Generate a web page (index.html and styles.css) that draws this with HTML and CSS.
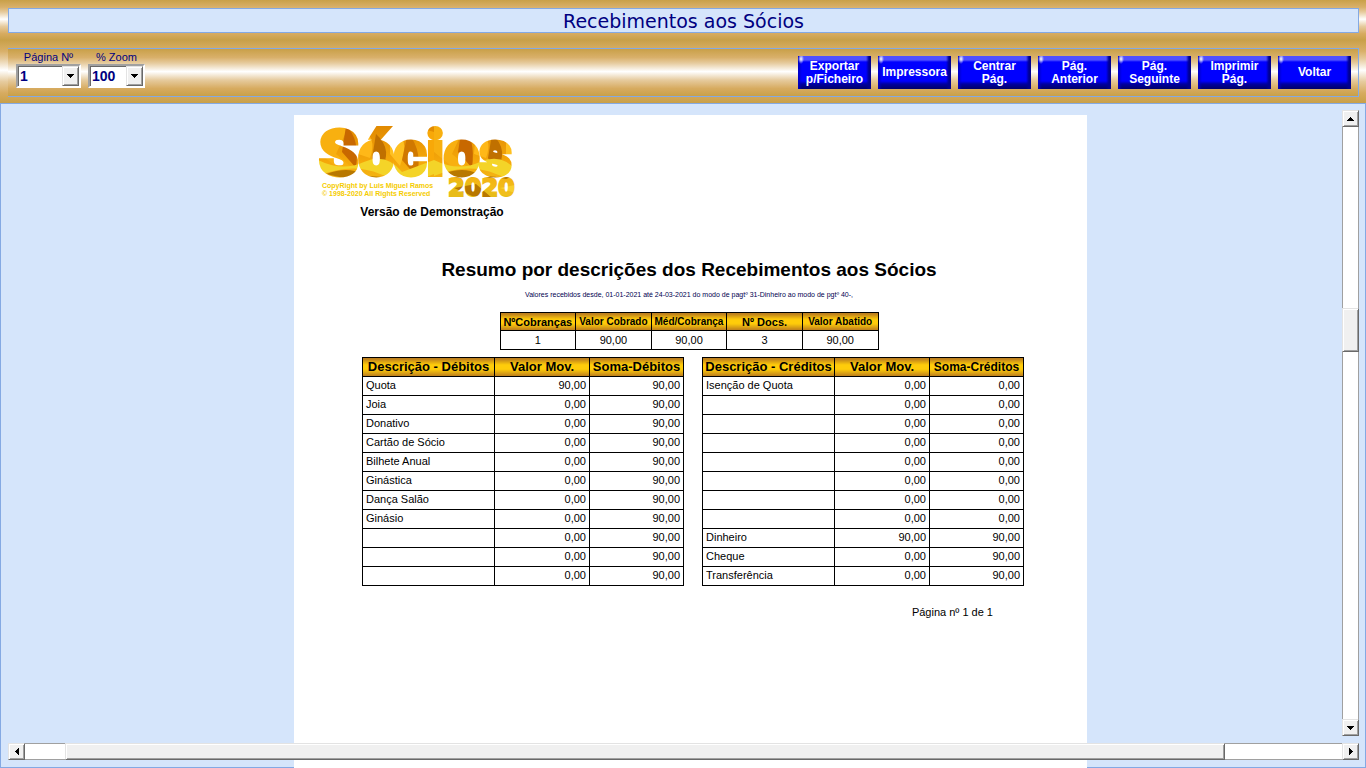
FILE: index.html
```html
<!DOCTYPE html>
<html lang="pt">

<head>
    <meta charset="UTF-8">
    <meta name="viewport" content="width=device-width, initial-scale=1.0">
    <title>Recebimentos aos Sócios</title>
    <link rel="stylesheet" href="styles.css">
</head>

<body>

    <header class="title-band">
        <h1 class="window-title">Recebimentos aos Sócios</h1>
    </header>

    <div class="toolbar-band">
        <div class="toolbar">
            <div class="fields">
                <div class="field">
                    <label for="page">Página Nº</label>
                    <div class="combo combo-page">
                        <select id="page">
                            <option>1</option>
                        </select>
                        <span class="combo-arrow"><svg width="7" height="4" viewBox="0 0 7 4"><path d="M0 0h7v1H0zM1 1h5v1H1zM2 2h3v1H2zM3 3h1v1H3z" /></svg></span>
                    </div>
                </div>
                <div class="field">
                    <label for="zoom">% Zoom</label>
                    <div class="combo combo-zoom">
                        <select id="zoom">
                            <option>100</option>
                        </select>
                        <span class="combo-arrow"><svg width="7" height="4" viewBox="0 0 7 4"><path d="M0 0h7v1H0zM1 1h5v1H1zM2 2h3v1H2zM3 3h1v1H3z" /></svg></span>
                    </div>
                </div>
            </div>
            <div class="actions">
                <button class="action" type="button">Exportar<br>p/Ficheiro</button>
                <button class="action" type="button">Impressora</button>
                <button class="action" type="button">Centrar<br>Pág.</button>
                <button class="action" type="button">Pág.<br>Anterior</button>
                <button class="action" type="button">Pág.<br>Seguinte</button>
                <button class="action" type="button">Imprimir<br>Pág.</button>
                <button class="action" type="button">Voltar</button>
            </div>
        </div>
    </div>

    <main class="viewer">
        <article class="paper">
            <div class="brand">
                <svg class="logo" width="200" height="76" viewBox="0 0 200 76" role="img" aria-label="Sócios 2020">
                    <defs>
                        <linearGradient id="gold" x1="0" y1="0" x2="0" y2="1">
                            <stop offset="0" stop-color="#e08800" />
                            <stop offset="0.5" stop-color="#f5a80a" />
                            <stop offset="1" stop-color="#f0c420" />
                        </linearGradient>
                        <pattern id="petals" width="116" height="76" patternUnits="userSpaceOnUse">
                            <rect width="116" height="76" fill="url(#gold)" />
                            <path d="M0 0L30 4L18 30L44 52L20 44L0 28z" fill="#f8b010" />
                            <path d="M28 2Q42 14 38 44L24 28z" fill="#c86800" />
                            <path d="M42 6Q60 12 52 34L40 30z" fill="#ffb818" />
                            <path d="M58 10Q76 26 62 48L54 34z" fill="#c07000" />
                            <path d="M72 6Q94 10 82 42L72 30z" fill="#ffc020" />
                            <path d="M90 8Q106 30 98 52L84 36z" fill="#d07800" />
                            <path d="M102 4L116 8V42L108 30z" fill="#f8a808" />
                            <path d="M0 36Q24 48 46 38T84 48L116 36V50Q90 62 62 50T0 52z" fill="#f4d428" />
                            <path d="M8 50Q30 42 44 50T84 50L72 55Q50 49 30 55z" fill="#b87800" />
                            <path d="M0 60Q28 52 54 66T116 60V70L80 76H0z" fill="#e8bc18" />
                            <path d="M20 64L42 60L58 74L38 72z" fill="#b87800" />
                            <path d="M66 64L96 58L108 72L84 70z" fill="#f8d030" />
                        </pattern>
                    </defs>
                    <text class="logo-name" x="1" y="51">Sócios</text>
                    <text class="logo-small" x="4" y="64">CopyRight by Luis Miguel Ramos</text>
                    <text class="logo-small" x="4" y="72">© 1998-2020 All Rights Reserved</text>
                    <text class="logo-year" x="130" y="72">2020</text>
                </svg>
                <p class="demo">Versão de Demonstração</p>
            </div>

            <div class="report-head">
                <h2 class="report-title">Resumo por descrições dos Recebimentos aos Sócios</h2>
                <p class="report-range">Valores recebidos desde, 01-01-2021 até 24-03-2021 do modo de pagtº 31-Dinheiro ao modo de pgtº 40-,</p>

                <table class="grid summary">
                    <thead>
                        <tr>
                            <th class="mid">NºCobranças</th>
                            <th>Valor Cobrado</th>
                            <th>Méd/Cobrança</th>
                            <th class="mid">Nº Docs.</th>
                            <th>Valor Abatido</th>
                        </tr>
                    </thead>
                    <tbody>
                        <tr><td>1</td><td>90,00</td><td>90,00</td><td>3</td><td>90,00</td></tr>
                    </tbody>
                </table>
            </div>

            <div class="movements">
                <table class="grid ledger">
                    <colgroup><col class="col-desc"><col class="col-value"><col class="col-sum"></colgroup>
                    <thead>
                        <tr><th>Descrição - Débitos</th><th>Valor Mov.</th><th>Soma-Débitos</th></tr>
                    </thead>
                    <tbody>
                        <tr><td>Quota</td><td>90,00</td><td>90,00</td></tr>
                        <tr><td>Joia</td><td>0,00</td><td>90,00</td></tr>
                        <tr><td>Donativo</td><td>0,00</td><td>90,00</td></tr>
                        <tr><td>Cartão de Sócio</td><td>0,00</td><td>90,00</td></tr>
                        <tr><td>Bilhete Anual</td><td>0,00</td><td>90,00</td></tr>
                        <tr><td>Ginástica</td><td>0,00</td><td>90,00</td></tr>
                        <tr><td>Dança Salão</td><td>0,00</td><td>90,00</td></tr>
                        <tr><td>Ginásio</td><td>0,00</td><td>90,00</td></tr>
                        <tr><td></td><td>0,00</td><td>90,00</td></tr>
                        <tr><td></td><td>0,00</td><td>90,00</td></tr>
                        <tr><td></td><td>0,00</td><td>90,00</td></tr>
                    </tbody>
                </table>

                <table class="grid ledger">
                    <colgroup><col class="col-desc"><col class="col-value"><col class="col-sum"></colgroup>
                    <thead>
                        <tr><th>Descrição - Créditos</th><th>Valor Mov.</th><th class="narrow">Soma-Créditos</th></tr>
                    </thead>
                    <tbody>
                        <tr><td>Isenção de Quota</td><td>0,00</td><td>0,00</td></tr>
                        <tr><td></td><td>0,00</td><td>0,00</td></tr>
                        <tr><td></td><td>0,00</td><td>0,00</td></tr>
                        <tr><td></td><td>0,00</td><td>0,00</td></tr>
                        <tr><td></td><td>0,00</td><td>0,00</td></tr>
                        <tr><td></td><td>0,00</td><td>0,00</td></tr>
                        <tr><td></td><td>0,00</td><td>0,00</td></tr>
                        <tr><td></td><td>0,00</td><td>0,00</td></tr>
                        <tr><td>Dinheiro</td><td>90,00</td><td>90,00</td></tr>
                        <tr><td>Cheque</td><td>0,00</td><td>90,00</td></tr>
                        <tr><td>Transferência</td><td>0,00</td><td>90,00</td></tr>
                    </tbody>
                </table>
            </div>

            <p class="page-number">Página nº 1 de 1</p>
        </article>

        <!-- scrollbars float over the paper -->
        <div class="scrollbar vertical">
            <button class="scroll-button" type="button" aria-label="Subir"><svg width="7" height="4" viewBox="0 0 7 4"><path d="M3 0h1v1H3zM2 1h3v1H2zM1 2h5v1H1zM0 3h7v1H0z" /></svg></button>
            <div class="track"><div class="before"></div><div class="thumb"></div><div class="after"></div></div>
            <button class="scroll-button" type="button" aria-label="Descer"><svg width="7" height="4" viewBox="0 0 7 4"><path d="M0 0h7v1H0zM1 1h5v1H1zM2 2h3v1H2zM3 3h1v1H3z" /></svg></button>
        </div>
        <div class="scrollbar horizontal">
            <button class="scroll-button" type="button" aria-label="Esquerda"><svg width="4" height="7" viewBox="0 0 4 7"><path d="M0 3h1v1H0zM1 2h1v3H1zM2 1h1v5H2zM3 0h1v7H3z" /></svg></button>
            <div class="track"><div class="before"></div><div class="thumb"></div><div class="after"></div></div>
            <button class="scroll-button" type="button" aria-label="Direita"><svg width="4" height="7" viewBox="0 0 4 7"><path d="M0 0h1v7H0zM1 1h1v5H1zM2 2h1v3H2zM3 3h1v1H3z" /></svg></button>
        </div>
    </main>

</body>

</html>
```
FILE: styles.css
```css
:root {
    --sky: #d5e5fb;
    --line: #84a9e3;
    --navy: #000080;
    --gold-band: linear-gradient(#c9a048, #d9b06a 18%, #e6cb9e 30%, #ffffff 48%, #e6cb9e 66%, #d7ab60 84%, #c9a048);
}

* {
    margin: 0;
    padding: 0;
    box-sizing: border-box;
}

body {
    height: 100vh;
    display: flex;
    flex-direction: column;
    overflow: hidden;
    font-family: "Liberation Sans", Arial, sans-serif;
    color: #000;
}

.title-band {
    padding: 8px 7px 7px 8px;
    background: var(--gold-band);
}

.window-title {
    height: 25px;
    border: 1px solid var(--line);
    background-color: var(--sky);
    color: var(--navy);
    font: 19px/24px "DejaVu Sans", Verdana, sans-serif;
    text-align: center;
}

.toolbar-band {
    padding: 8px 7px 6px 8px;
    background: var(--gold-band);
}

.toolbar {
    height: 49px;
    display: flex;
    justify-content: space-between;
    padding: 0 7px 0 8px;
    border: solid var(--line);
    border-width: 1px 1px 1px 0;
    background: var(--gold-band);
}

.fields {
    display: flex;
    gap: 7px;
    padding-top: 2px;
}

.field label {
    display: block;
    height: 13px;
    color: var(--navy);
    font-size: 11px;
    line-height: 13px;
    text-align: center;
}

.combo {
    display: flex;
    height: 24px;
    border: 2px solid;
    border-color: #a0a0a0 #fff #fff #a0a0a0;
    background-color: #fff;
    box-shadow: inset 1px 1px #696969;
}

.combo-page {
    width: 65px;
}

.combo-zoom {
    width: 57px;
}

.combo select {
    flex: 1;
    min-width: 0;
    padding-left: 2px;
    border: 0;
    background: none;
    appearance: none;
    color: var(--navy);
    font: bold 14px/20px "Liberation Sans", Arial, sans-serif;
}

.combo-arrow,
.scroll-button,
.thumb {
    background-color: #f0f0f0;
    border: 1px solid;
    border-color: #e3e3e3 #696969 #696969 #e3e3e3;
    box-shadow: inset 1px 1px #fff, inset -1px -1px #a0a0a0;
}

.combo-arrow {
    width: 17px;
    display: flex;
    align-items: center;
    justify-content: center;
    pointer-events: none;
}

.actions {
    display: flex;
    gap: 7px;
    padding-top: 7px;
}

.action {
    width: 73px;
    height: 33px;
    border: 0;
    background:
        radial-gradient(3px 5px at 3px 3px, #ffffff, transparent),
        linear-gradient(to right, #0000c0, transparent 4px),
        linear-gradient(to left, #000090 2px, transparent 5px),
        linear-gradient(#5050ff 4px, #0000ff 6px, #0000ff 25px, #0000a0 28px, #000068);
    color: #fff;
    font: bold 12px/13px "Liberation Sans", Arial, sans-serif;
    cursor: pointer;
}

.viewer {
    flex: 1;
    min-height: 0;
    position: relative;
    overflow: hidden;
    padding: 12px 0 0 15px;
    background-color: var(--sky);
    box-shadow: inset 0 0 0 1px var(--line);
}

.paper {
    width: 793px;
    height: 1122px;
    margin: 0 auto;
    padding: 9px 63px 0 68px;
    background-color: #fff;
}

.brand {
    width: 200px;
    margin-left: -44px;
}

.logo {
    display: block;
}

.logo-name,
.logo-year {
    fill: url(#petals);
    stroke: url(#petals);
}

.logo-name {
    font-family: Roboto, "Liberation Sans", sans-serif;
    font-size: 63px;
    font-weight: 900;
    stroke-width: 4px;
}

.logo-year {
    font-family: "DejaVu Sans", Verdana, sans-serif;
    font-size: 24px;
    font-weight: bold;
    stroke-width: 2px;
}

.logo-small {
    fill: #f5cc00;
    font-size: 7px;
    font-weight: bold;
}

.demo {
    margin-top: 5px;
    padding-left: 28px;
    font-size: 12px;
    font-weight: bold;
    line-height: 14px;
    text-align: center;
    white-space: nowrap;
}

.report-head {
    padding-right: 8px;
}

.report-title {
    margin-top: 39px;
    font-size: 19px;
    line-height: 24px;
    text-align: center;
    white-space: nowrap;
}

.report-range {
    margin-top: 7px;
    color: #000050;
    font-size: 7px;
    line-height: 12px;
    text-align: center;
    white-space: nowrap;
}

.grid {
    border-collapse: collapse;
    table-layout: fixed;
}

.grid th,
.grid td {
    height: 19px;
    border: 1px solid #000;
    font-size: 11px;
    line-height: 12px;
    white-space: nowrap;
}

.grid th {
    background: linear-gradient(#b8791e, #ffcc0a 35%, #ffcc0a 60%, #b8791e);
}

.summary {
    width: 379px;
    margin: 11px auto 0;
}

.summary th {
    height: 18px;
    font-size: 10px;
}

.summary th.mid {
    font-size: 11px;
}

.summary td {
    text-align: center;
}

.movements {
    display: flex;
    justify-content: space-between;
    margin-top: 7px;
}

.ledger {
    width: 322px;
}

.col-desc {
    width: 132px;
}

.col-value {
    width: 95px;
}

.col-sum {
    width: 94px;
}

.ledger th {
    font-size: 13px;
}

.ledger th.narrow {
    font-size: 12px;
}

.ledger td {
    padding: 0 3px 2px;
    text-align: right;
}

.ledger td:first-child {
    text-align: left;
}

.page-number {
    margin-top: 19px;
    padding-right: 31px;
    font-size: 11px;
    line-height: 14px;
    text-align: right;
}

.scrollbar {
    position: absolute;
    display: flex;
}

.vertical {
    top: 7px;
    right: 7px;
    bottom: 32px;
    width: 17px;
    flex-direction: column;
}

.horizontal {
    left: 8px;
    right: 7px;
    bottom: 8px;
    height: 17px;
}

.scroll-button {
    flex: 0 0 17px;
    display: flex;
    align-items: center;
    justify-content: center;
}

.track {
    flex: 1;
    display: flex;
    background-color: #fff;
}

.vertical .track {
    flex-direction: column;
    border: solid #a0a0a0;
    border-width: 0 1px;
}

.horizontal .track {
    border: solid #a0a0a0;
    border-width: 1px 0;
}

.vertical .before {
    flex: 181;
}

.vertical .thumb {
    flex: 0 0 44px;
    margin: 0 -1px;
}

.vertical .after {
    flex: 366;
}

.horizontal .before {
    flex: 40;
}

.horizontal .thumb {
    flex: 1160;
    margin: -1px 0;
}

.horizontal .after {
    flex: 117;
}
```
